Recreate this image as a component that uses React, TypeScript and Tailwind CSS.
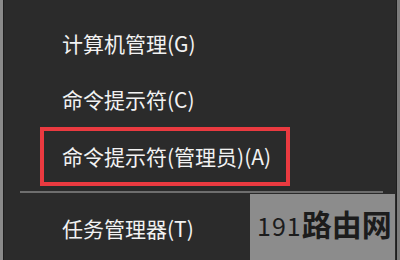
export default function App() {
  const font = { fontFamily: '"Noto Sans CJK SC", "Noto Sans", sans-serif' };
  return (
    <div className="relative flex w-[400px] h-[260px] overflow-hidden bg-[#7a7a7a]" style={font}>
      <div className="w-[3px] bg-[#8a8a8a]" />
      <div className="flex-1 flex flex-col bg-[#2b2b2b] border-l border-r border-[#1e1e1e] pt-[15px] text-[21px] leading-[21px] text-[#f2f2f2]">
        <div className="h-[56px] flex items-center pl-[58px]">计算机管理(G)</div>
        <div className="h-[56px] flex items-center pl-[58px]">命令提示符(C)</div>
        <div className="h-[59px] w-[250px] ml-[36px] border-4 border-[#ea3a40] flex items-center pl-[18px]">
          命令提示符(管理员)(A)
        </div>
        <div className="mt-[5px] h-[2px] w-[363px] ml-[16px] bg-[#6e6e6e]" />
        <div className="mt-[7px] h-[56px] flex items-center pl-[58px]">任务管理器(T)</div>
      </div>
      <div className="w-[3px] bg-[#7c7c7c]" />

      {/* watermark */}
      <div className="absolute left-[250px] top-[194px] right-[5px] bottom-0 bg-[#8c8c8c] flex items-end whitespace-nowrap pb-[22px] pl-[7px] text-[#1c1c1c]">
        <span className="text-[25px] leading-none tracking-[1px]">191</span>
        <span className="text-[30px] leading-none font-semibold">路由网</span>
      </div>
    </div>
  );
}
